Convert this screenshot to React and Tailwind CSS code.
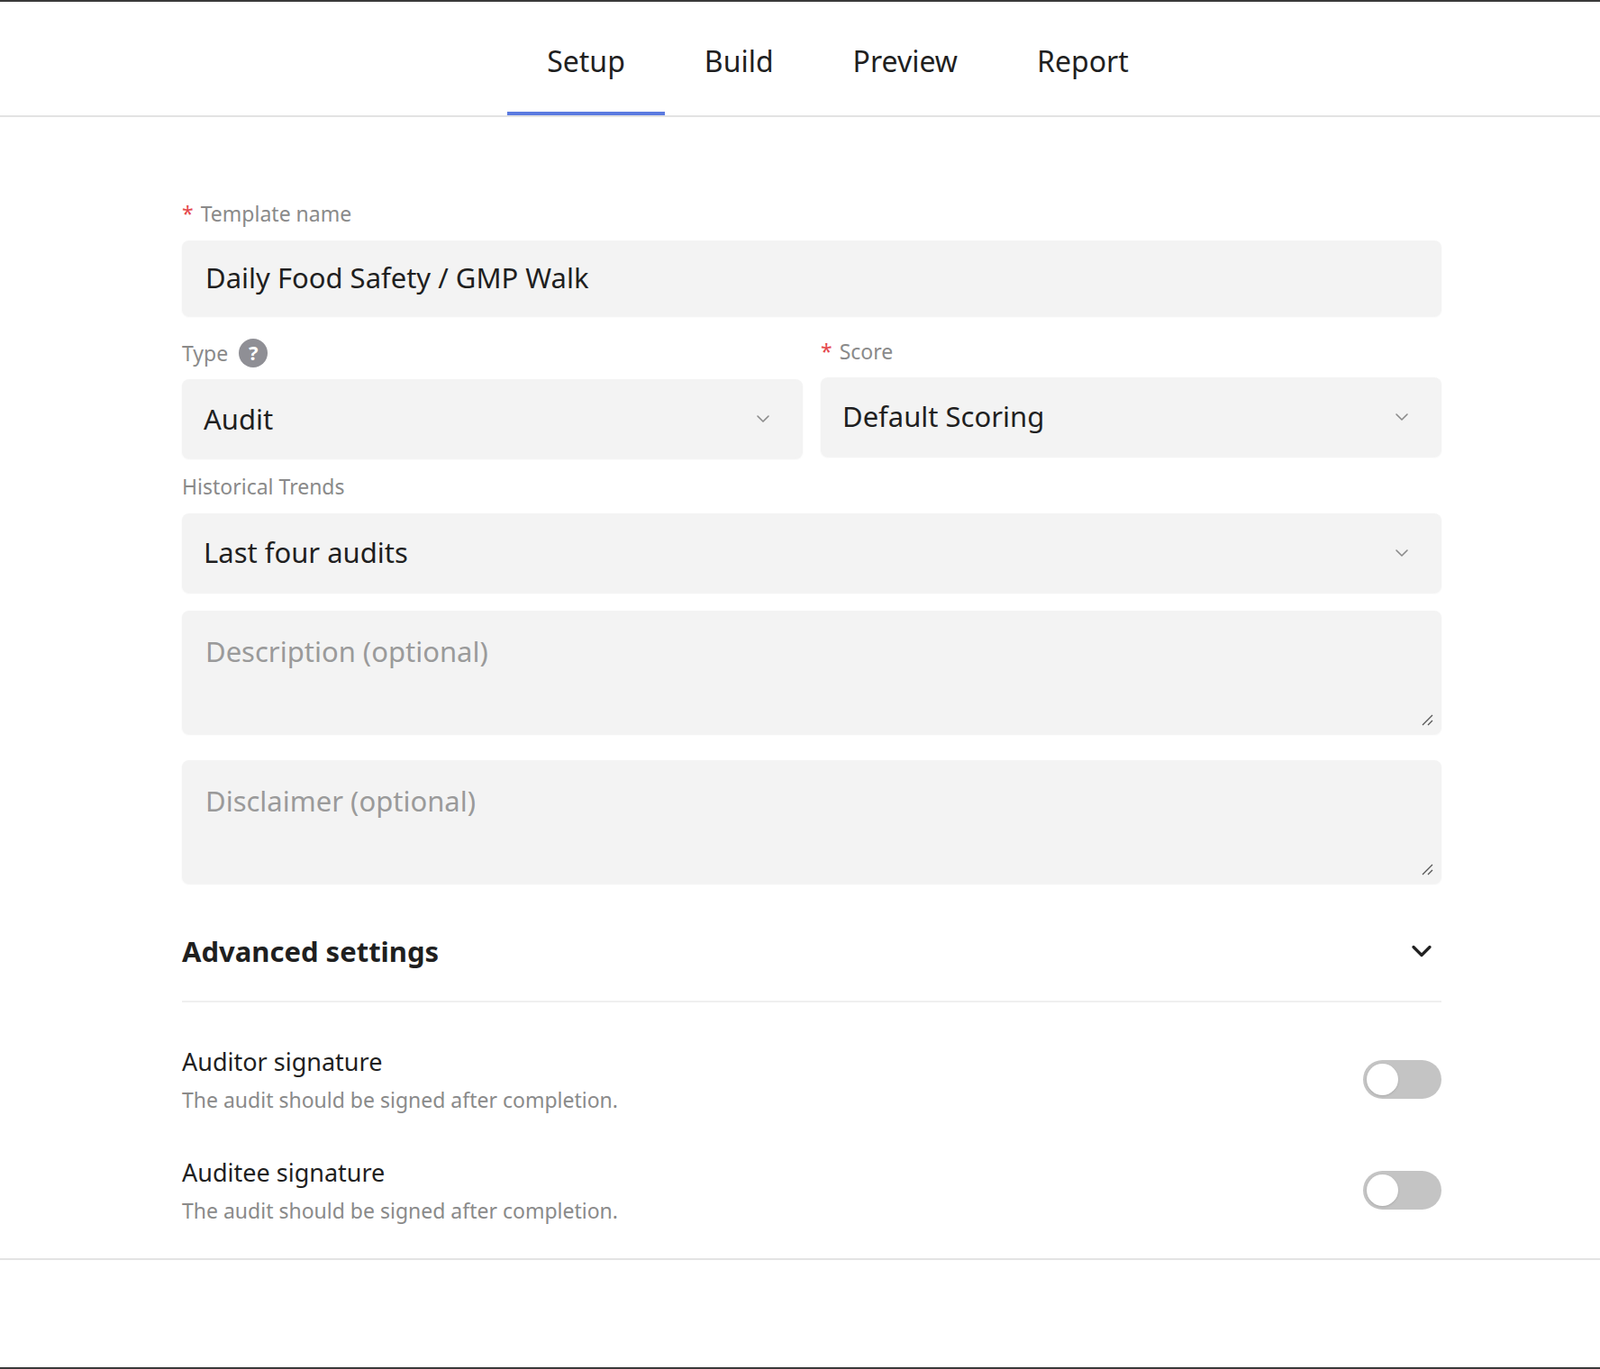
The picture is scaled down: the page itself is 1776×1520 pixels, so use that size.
import { ChevronDown } from "lucide-react";

function Select({ value }) {
  return (
    <div className="flex h-[88px] items-center justify-between rounded-lg bg-[#f3f3f3] pl-6 pr-8 shadow-[0_1px_2px_rgba(0,0,0,0.06)]">
      <span className="text-[31px] text-[#1f1f1f]">{value}</span>
      <ChevronDown className="h-6 w-6 text-[#8a8a8a]" strokeWidth={1.6} />
    </div>
  );
}

function Textarea({ placeholder }) {
  return (
    <div className="relative h-[137px] rounded-lg bg-[#f3f3f3] px-[26px] pt-[22px] text-[31px] text-[#9a9a9a] shadow-[0_1px_2px_rgba(0,0,0,0.06)]">
      {placeholder}
      <svg className="absolute bottom-2 right-2 h-4 w-4 text-[#555]" viewBox="0 0 16 16" fill="none" stroke="currentColor" strokeWidth="1.3">
        <path d="M14 3 3 14M14 9 9 14" />
      </svg>
    </div>
  );
}

function Toggle() {
  return (
    <div className="flex h-[43px] w-[87px] items-center rounded-full bg-[#c4c4c4] px-[4px]">
      <div className="h-[35px] w-[35px] rounded-full bg-white shadow" />
    </div>
  );
}

function SigRow({ title }) {
  return (
    <div className="flex items-center justify-between">
      <div>
        <div className="text-[27px] text-[#1f1f1f]">{title}</div>
        <div className="mt-1 text-[23px] text-[#8a8a8a]">The audit should be signed after completion.</div>
      </div>
      <Toggle />
    </div>
  );
}

export default function App() {
  return (
    <div className="min-h-[1520px] border-t-2 border-b-2 border-[#3a3a3a] bg-white font-['Lato',sans-serif]">
      <header className="flex h-[128px] justify-center border-b-2 border-[#e3e3e3]">
        <nav className="ml-[84px] flex">
          {["Setup", "Build", "Preview", "Report"].map((t, i) => (
            <div
              key={t}
              className={`flex h-full items-start px-[44px] pt-[42px] text-[32px] text-[#1f1f1f] ${i === 0 ? "border-b-4 border-[#5b7be0]" : ""}`}
            >
              {t}
            </div>
          ))}
        </nav>
      </header>

      <main className="ml-[202px] w-[1398px] pt-[90px]">
        <label className="block text-[23px] text-[#8a8a8a]">
          <span className="mr-2 text-[#e5484d]">*</span>Template name
        </label>
        <div className="mt-3 flex h-[84px] items-center rounded-lg bg-[#f3f3f3] px-[26px] text-[31px] text-[#1f1f1f] shadow-[0_1px_2px_rgba(0,0,0,0.06)]">
          Daily Food Safety / GMP Walk
        </div>

        <div className="mt-[24px] grid grid-cols-2 gap-5">
          <div>
            <label className="flex items-center gap-3 text-[23px] text-[#8a8a8a]">
              Type
              <span className="flex h-8 w-8 items-center justify-center rounded-full bg-[#8f8f95] text-[22px] font-bold text-white">?</span>
            </label>
            <div className="mt-3">
              <Select value="Audit" />
            </div>
          </div>
          <div>
            <label className="flex h-8 items-center text-[23px] text-[#8a8a8a]">
              <span className="mr-2 text-[#e5484d]">*</span>Score
            </label>
            <div className="mt-3">
              <Select value="Default Scoring" />
            </div>
          </div>
        </div>

        <label className="mt-[14px] block text-[23px] text-[#8a8a8a]">Historical Trends</label>
        <div className="mt-3">
          <Select value="Last four audits" />
        </div>

        <div className="mt-[20px]">
          <Textarea placeholder="Description (optional)" />
        </div>
        <div className="mt-[29px]">
          <Textarea placeholder="Disclaimer (optional)" />
        </div>

        <div className="mt-[52px] flex items-center justify-between border-b-2 border-[#efefef] pb-[32px]">
          <h2 className="text-[31px] font-bold text-[#1f1f1f]">Advanced settings</h2>
          <ChevronDown className="mr-1 h-9 w-9 text-[#222]" strokeWidth={2.2} />
        </div>

        <div className="mt-[46px] flex flex-col gap-[44px] pb-[36px]">
          <SigRow title="Auditor signature" />
          <SigRow title="Auditee signature" />
        </div>
      </main>
      <div className="border-t-2 border-[#e3e3e3]" />
    </div>
  );
}
